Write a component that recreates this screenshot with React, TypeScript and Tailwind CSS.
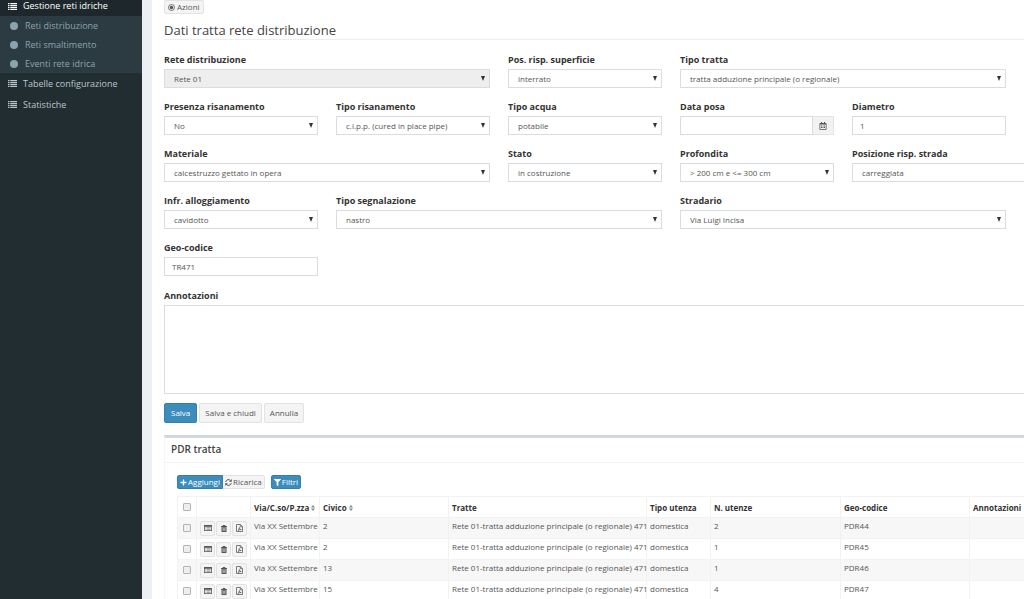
import React, { useId } from "react";
import { FaPlus, FaFilter, FaRegCalendarAlt } from "react-icons/fa";

type FieldSpec = { label: string; kind: "select" | "text" | "date"; value: string; span: string; disabled?: boolean };

const fields: FieldSpec[] = [
  { label: "Rete distribuzione", kind: "select", value: "Rete 01", span: "col-span-2", disabled: true },
  { label: "Pos. risp. superficie", kind: "select", value: "interrato", span: "col-span-1" },
  { label: "Tipo tratta", kind: "select", value: "tratta adduzione principale (o regionale)", span: "col-span-2" },
  { label: "Presenza risanamento", kind: "select", value: "No", span: "col-start-1" },
  { label: "Tipo risanamento", kind: "select", value: "c.i.p.p. (cured in place pipe)", span: "col-span-1" },
  { label: "Tipo acqua", kind: "select", value: "potabile", span: "col-span-1" },
  { label: "Data posa", kind: "date", value: "", span: "col-span-1" },
  { label: "Diametro", kind: "text", value: "1", span: "col-span-1" },
  { label: "Materiale", kind: "select", value: "calcestruzzo gettato in opera", span: "col-start-1 col-span-2" },
  { label: "Stato", kind: "select", value: "in costruzione", span: "col-span-1" },
  { label: "Profondita", kind: "select", value: "> 200 cm e <= 300 cm", span: "col-span-1" },
  { label: "Posizione risp. strada", kind: "select", value: "carreggiata", span: "col-span-2" },
  { label: "Infr. alloggiamento", kind: "select", value: "cavidotto", span: "col-start-1" },
  { label: "Tipo segnalazione", kind: "select", value: "nastro", span: "col-span-2" },
  { label: "Stradario", kind: "select", value: "Via Luigi Incisa", span: "col-span-2" },
  { label: "Geo-codice", kind: "text", value: "TR471", span: "col-start-1" },
];

const rows = [
  { via: "Via XX Settembre", civico: "2", utenze: "2", geo: "PDR44" },
  { via: "Via XX Settembre", civico: "2", utenze: "1", geo: "PDR45" },
  { via: "Via XX Settembre", civico: "13", utenze: "1", geo: "PDR46" },
  { via: "Via XX Settembre", civico: "15", utenze: "4", geo: "PDR47" },
];

function ListIcon() {
  return (
    <svg viewBox="0 0 18 14" className="h-[7px] w-[9px] shrink-0" fill="currentColor" aria-hidden="true">
      <path d="M0 0h3v2.4H0zM4.5 0H18v2.4H4.5zM0 3.9h3v2.4H0zM4.5 3.9H18v2.4H4.5zM0 7.8h3v2.4H0zM4.5 7.8H18v2.4H4.5zM0 11.6h3V14H0zM4.5 11.6H18V14H4.5z" />
    </svg>
  );
}

function TargetIcon() {
  return (
    <svg viewBox="0 0 14 14" className="size-[7px]" aria-hidden="true">
      <circle cx="7" cy="7" r="6" fill="none" stroke="currentColor" strokeWidth="1.6" />
      <circle cx="7" cy="7" r="3.4" fill="currentColor" />
    </svg>
  );
}

function RefreshIcon() {
  return (
    <svg viewBox="0 0 14 14" className="size-[7px]" aria-hidden="true">
      <path d="M1.500 6A5.500 5.500 0 0 1 11 3M12.500 8A5.500 5.500 0 0 1 3 11" fill="none" stroke="currentColor" strokeWidth="2" />
      <path d="M13.500 0v5.500H8zM.5 14V8.500H6z" fill="currentColor" />
    </svg>
  );
}

function CardIcon() {
  return (
    <svg viewBox="0 0 16 12" className="h-[6px] w-[8px]" aria-hidden="true">
      <path d="M1 0h14a1 1 0 0 1 1 1v10a1 1 0 0 1-1 1H1a1 1 0 0 1-1-1V1a1 1 0 0 1 1-1zM1.500 3.500v7h13v-7z" fill="currentColor" fillRule="evenodd" />
      <path d="M3 5h2v1.400H3zM6 5h7v1.400H6zM3 7.800h2v1.400H3zM6 7.800h7v1.400H6z" fill="currentColor" />
    </svg>
  );
}

function TrashIcon() {
  return (
    <svg viewBox="0 0 12 14" className="h-[7px] w-[6px]" aria-hidden="true">
      <path d="M4 0h4l1 2h3v1.800H0V2h3zM1 4.500h10V13a1 1 0 0 1-1 1H2a1 1 0 0 1-1-1zM3.400 6v6h1V6zM5.500 6v6h1V6zM7.600 6v6h1V6z" fill="currentColor" fillRule="evenodd" />
    </svg>
  );
}

function PdfIcon() {
  return (
    <svg viewBox="0 0 14 16" className="h-[8px] w-[7px]" fill="none" stroke="currentColor" strokeWidth="1.500" aria-hidden="true">
      <path d="M1 1h7.500L13 5.200V15H1zM8.500 1v4.500H13" />
      <path d="M4 13c1.500-1 2.500-3.500 2.500-6 .5 2.500 1.500 4 4 4-2.500 0-4.500.6-6.500 2z" />
    </svg>
  );
}

function SortIcon() {
  return (
    <svg viewBox="0 0 8 12" className="ml-[2px] inline h-[6px] w-[4px] align-baseline" fill="#888" aria-hidden="true">
      <path d="M4 0l4 5H0zM4 12l4-5H0z" />
    </svg>
  );
}

const labelStyle = "block h-[17px] text-[9px] leading-[16px] font-bold text-[#333]";
const control = "h-[19px] w-full appearance-none rounded-none border border-[#d9dce2] text-[8px] leading-[17px] text-[#555] outline-none";

function Field({ field }: { field: FieldSpec }) {
  const id = useId();
  return (
    <div className={`min-w-0 ${field.span}`}>
      <label htmlFor={id} className={labelStyle}>
        {field.label}
      </label>
      {field.kind === "select" && (
        <div className="relative">
          <select id={id} disabled={field.disabled} className={`${control} pl-[9px] opacity-100 ${field.disabled ? "bg-[#eee]" : "bg-white"}`}>
            <option>{field.value}</option>
          </select>
          <svg viewBox="0 0 4 5" className="pointer-events-none absolute top-[7px] right-[5px] h-[5px] w-[4px]" fill="#333" aria-hidden="true">
            <path d="M0 0h4L2 5z" />
          </svg>
        </div>
      )}
      {field.kind === "text" && <input id={id} type="text" defaultValue={field.value} className={`${control} bg-white px-[7px]`} />}
      {field.kind === "date" && (
        <div className="flex">
          <input id={id} type="text" defaultValue="" className={`${control} min-w-0 flex-1 bg-white px-[7px]`} />
          <button type="button" aria-label="Calendario" className="flex w-[21px] items-center justify-center border border-l-0 border-[#e4e4e4] bg-[#f2f2f2] text-[#555]">
            <FaRegCalendarAlt size={8} />
          </button>
        </div>
      )}
    </div>
  );
}

const plain = "rounded-[2px] border border-[#e2e2e2] bg-[#f4f4f4] text-[#555]";
const blue = "rounded-[2px] border border-[#367fa9] bg-[#3c8dbc] text-white";
const iconButton = `${plain} flex h-[15px] w-[15px] items-center justify-center`;
const tool = "flex h-[14px] items-center gap-[1px] px-[2px]";
const cell = "border border-[#f2f2f2] px-[3px]";
const head = `${cell} pb-[3px] text-[#333]`;
const body = `${cell} pt-[2px]`;
const check = "mx-auto block size-[8px] appearance-none rounded-[1px] border border-[#b4b4b4] bg-[#eee]";

export default function App() {
  return (
    <div className="flex h-screen min-h-[599px] overflow-hidden bg-[#ecf0f5] font-['Open_Sans',sans-serif] text-[8px] text-[#555]">
      <aside className="w-[142px] shrink-0 bg-[#222d32] text-[9px] text-[#b8c7ce]">
        <nav>
          <a href="#reti" className="flex h-[16px] items-center gap-[6px] bg-[#1e282c] pb-[4px] pl-[8px] font-medium text-white">
            <ListIcon />
            Gestione reti idriche
          </a>
          <ul className="bg-[#2c3b41] text-[#8aa4af]">
            {["Reti distribuzione", "Reti smaltimento", "Eventi rete idrica"].map((item) => (
              <li key={item}>
                <a href="#voce" className="flex h-[19px] items-center gap-[7px] pl-[10px]">
                  <span className="size-[8px] rounded-full bg-[#8aa4af]" />
                  {item}
                </a>
              </li>
            ))}
          </ul>
          {["Tabelle configurazione", "Statistiche"].map((item) => (
            <a key={item} href="#voce" className="flex h-[21px] items-center gap-[6px] pl-[8px]">
              <ListIcon />
              {item}
            </a>
          ))}
        </nav>
      </aside>

      <main className="ml-[10px] min-w-0 flex-1 overflow-hidden bg-white pl-[12px]">
        <button type="button" className={`${plain} flex h-[14px] items-center gap-[2px] px-[3px]`}>
          <TargetIcon />
          Azioni
        </button>
        <div className="min-w-[1014px]">
          <h1 className="mt-[6px] mb-[12px] h-[20px] border-b border-[#eee] text-[13px] leading-[20px] text-[#444]">Dati tratta rete distribuzione</h1>
          <form onSubmit={(e) => e.preventDefault()}>
            <div className="grid grid-cols-[repeat(6,minmax(154px,1fr))] gap-x-[18px] gap-y-[11px]">
              {fields.map((field) => (
                <Field key={field.label} field={field} />
              ))}
            </div>
            <label htmlFor="note" className={`${labelStyle} mt-[12px]`}>
              Annotazioni
            </label>
            <textarea id="note" className="block h-[89px] w-full resize-none border border-[#d9dce2] bg-white p-[7px] outline-none" />
            <div className="mt-[9px] flex gap-[2px]">
              <button type="submit" className={`${blue} h-[20px] px-[6px]`}>Salva</button>
              <button type="button" className={`${plain} h-[20px] px-[5px]`}>Salva e chiudi</button>
              <button type="button" className={`${plain} h-[20px] px-[5px]`}>Annulla</button>
            </div>
          </form>

          <section className="mt-[12px] border border-t-[3px] border-[#f6f6f6] border-t-[#d2d6de]">
            <h2 className="h-[25px] border-b border-[#f4f4f4] pl-[6px] text-[10px] leading-[23px] font-semibold text-[#444]">PDR tratta</h2>
            <div className="p-[12px]">
              <div className="mb-[7px] flex">
                <button type="button" className={`${blue} ${tool} rounded-r-none`}>
                  <FaPlus size={7} />
                  Aggiungi
                </button>
                <button type="button" className={`${plain} ${tool} rounded-l-none border-l-0`}>
                  <RefreshIcon />
                  Ricarica
                </button>
                <button type="button" className={`${blue} ${tool} ml-[6px]`}>
                  <FaFilter size={7} />
                  Filtri
                </button>
              </div>
              <table className="w-full table-fixed border-collapse text-left leading-[12px]">
                <colgroup>
                  <col className="w-[19px]" />
                  <col className="w-[54px]" />
                  <col className="w-[69px]" />
                  <col className="w-[129px]" />
                  <col className="w-[198px]" />
                  <col className="w-[64px]" />
                  <col className="w-[130px]" />
                  <col className="w-[129px]" />
                  <col />
                </colgroup>
                <thead>
                  <tr className="h-[21px] align-bottom whitespace-nowrap">
                    <th className={`${cell} align-middle`}>
                      <input type="checkbox" aria-label="Seleziona tutto" className={check} />
                    </th>
                    <th className={cell} aria-label="Comandi" />
                    <th className={head}>Via/C.so/P.zza<SortIcon /></th>
                    <th className={head}>Civico<SortIcon /></th>
                    <th className={head}>Tratte</th>
                    <th className={head}>Tipo utenza</th>
                    <th className={head}>N. utenze</th>
                    <th className={head}>Geo-codice</th>
                    <th className={head}>Annotazioni</th>
                  </tr>
                </thead>
                <tbody>
                  {rows.map((row) => (
                    <tr key={row.geo} className="h-[21px] align-top whitespace-nowrap odd:bg-[#f7f7f7]">
                      <td className={`${cell} align-middle`}>
                        <input type="checkbox" aria-label={row.geo} className={check} />
                      </td>
                      <td className={`${cell} align-middle`}>
                        <div className="flex gap-[1px]">
                          <button type="button" aria-label="Dettaglio" className={iconButton}><CardIcon /></button>
                          <button type="button" aria-label="Elimina" className={iconButton}><TrashIcon /></button>
                          <button type="button" aria-label="Documento" className={iconButton}><PdfIcon /></button>
                        </div>
                      </td>
                      <td className={body}>{row.via}</td>
                      <td className={body}>{row.civico}</td>
                      <td className={body}>Rete 01-tratta adduzione principale (o regionale) 471</td>
                      <td className={body}>domestica</td>
                      <td className={body}>{row.utenze}</td>
                      <td className={body}>{row.geo}</td>
                      <td className={cell} />
                    </tr>
                  ))}
                </tbody>
              </table>
            </div>
          </section>
        </div>
      </main>
    </div>
  );
}
